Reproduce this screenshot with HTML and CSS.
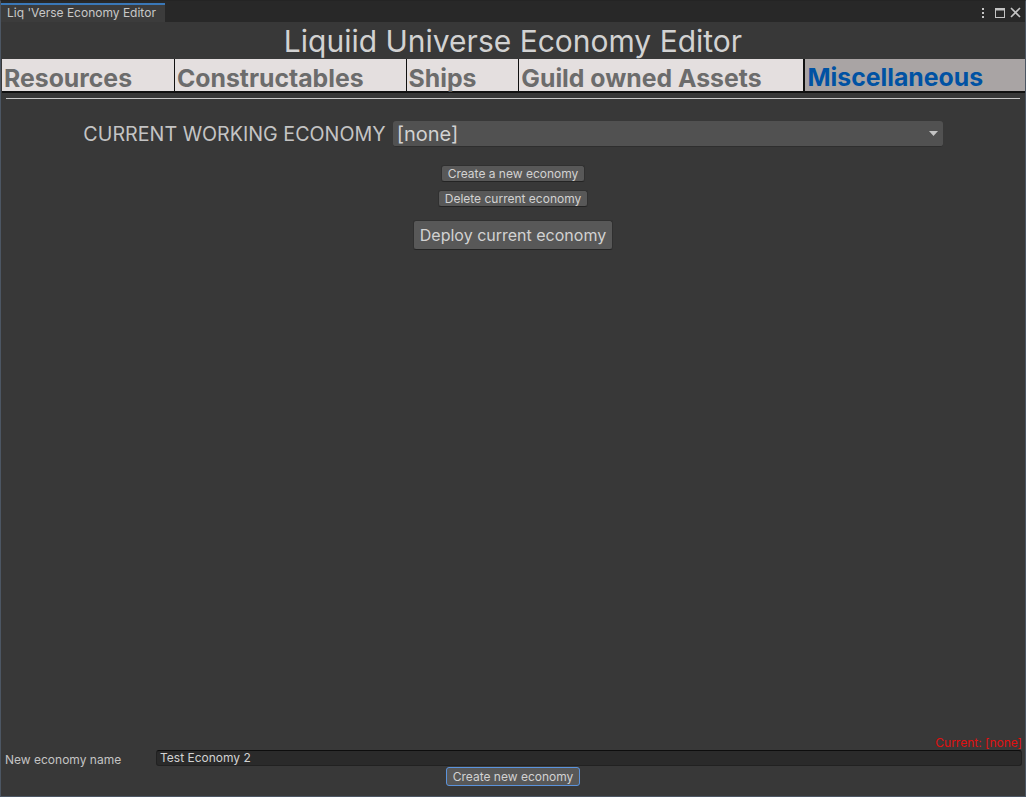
FILE: index.html
```html
<!DOCTYPE html>
<html>
<head>
<meta charset="utf-8">
<link rel="stylesheet" href="styles.css">
</head>
<body>
<div class="window">
  <div class="tabstrip">
    <div class="doc-tab">Liq 'Verse Economy Editor</div>
    <div class="strip-fill"></div>
    <div class="win-icons">
      <svg class="ico-menu" width="4" height="10" viewBox="0 0 4 10"><rect x="1" y="0" width="2" height="2" fill="#c4c4c4"/><rect x="1" y="4" width="2" height="2" fill="#c4c4c4"/><rect x="1" y="8" width="2" height="2" fill="#c4c4c4"/></svg>
      <svg class="ico-max" width="10" height="10" viewBox="0 0 10 10"><rect x="0.5" y="0.5" width="9" height="9" fill="none" stroke="#c4c4c4"/><rect x="0.5" y="0.5" width="9" height="2" fill="#c4c4c4"/></svg>
      <svg class="ico-close" width="11" height="11" viewBox="0 0 11 11"><path d="M1 1 L10 10 M10 1 L1 10" stroke="#c4c4c4" stroke-width="1.6"/></svg>
    </div>
  </div>
  <div class="content">
    <div class="title">Liquiid Universe Economy Editor</div>
    <div class="toolbar">
      <div class="tb-item">Resources</div>
      <div class="tb-item">Constructables</div>
      <div class="tb-item">Ships</div>
      <div class="tb-item">Guild owned Assets</div>
      <div class="tb-item selected">Miscellaneous</div>
    </div>
    <div class="rule"></div>
    <div class="working-row">
      <span class="working-label">CURRENT WORKING ECONOMY</span>
      <div class="dropdown">
        <span>[none]</span>
        <svg width="9" height="5" viewBox="0 0 9 5"><path d="M0 0 H9 L4.5 5 Z" fill="#c4c4c4"/></svg>
      </div>
    </div>
    <div class="actions">
      <button class="btn small">Create a new economy</button>
      <button class="btn small second">Delete current economy</button>
      <button class="btn large">Deploy current economy</button>
    </div>
    <div class="spacer"></div>
    <div class="footer">
      <div class="current">Current: [none]</div>
      <div class="name-row">
        <span class="name-label">New economy name</span>
        <div class="text-input">Test Economy 2</div>
      </div>
      <div class="create-row">
        <button class="btn focused">Create new economy</button>
      </div>
    </div>
  </div>
</div>
</body>
</html>
```
FILE: styles.css
```css
* { box-sizing: border-box; }
html, body { margin: 0; padding: 0; }
body {
  width: 1026px;
  height: 797px;
  background: #282828;
  font-family: Inter, "Noto Sans", sans-serif;
  overflow: hidden;
}
.window {
  width: 1026px;
  height: 797px;
  border: 1px solid #4c5663;
  border-top-color: #242424;
  display: flex;
  flex-direction: column;
  background: #383838;
}
.tabstrip {
  height: 21px;
  display: flex;
  align-items: flex-end;
  background: #282828;
}
.doc-tab {
  width: 164px;
  height: 19px;
  border-top: 2px solid #3a78b8;
  background: #3c3c3c;
  color: #c8c8c8;
  font-size: 12px;
  line-height: 16px;
  padding-left: 6px;
}
.strip-fill { flex: 1; }
.win-icons {
  align-self: stretch;
  display: flex;
  align-items: center;
  padding-right: 4px;
  padding-top: 2px;
}
.ico-menu { margin-right: 10px; }
.ico-max { margin-right: 5px; }
.content {
  flex: 1;
  display: flex;
  flex-direction: column;
}
.title {
  height: 37px;
  text-align: center;
  color: #d2d2d2;
  font-size: 30px;
  line-height: 38px;
}
.toolbar {
  height: 34px;
  display: flex;
  margin-left: 1px;
  border-bottom: 2px solid #111;
}
.tb-item {
  flex: 1 1 auto;
  background: #e4dfdf;
  color: #6c6c6c;
  font-weight: 700;
  font-size: 24.8px;
  line-height: 34px;
  padding-left: 2px;
  padding-top: 2px;
  border-left: 1px solid #111;
  white-space: nowrap;
}
.tb-item:first-child { border-left: none; }
.tb-item.selected {
  background: #a9a4a4;
  color: #0052a3;
  border-left: 2px solid #111;
  padding-top: 1px;
}
.rule {
  height: 1px;
  margin: 5px 5px 0 5px;
  background: #c8c8c8;
}
.working-row {
  margin-top: 22px;
  display: flex;
  justify-content: center;
  align-items: center;
  gap: 7px;
}
.working-label {
  color: #c4c4c4;
  font-size: 19.7px;
}
.dropdown {
  width: 550px;
  height: 26px;
  background: #515151;
  border-radius: 3px;
  border-bottom: 1px solid #2e2e2e;
  display: flex;
  align-items: center;
  justify-content: space-between;
  padding: 0 5px 0 4px;
  color: #d2d2d2;
  font-size: 20px;
}
.actions {
  margin-top: 18px;
  display: flex;
  flex-direction: column;
  align-items: center;
}
.btn {
  font-family: Inter, "Noto Sans", sans-serif;
  background: #585858;
  color: #d2d2d2;
  border: 1px solid #303030;
  border-bottom-color: #242424;
  border-radius: 3px;
  padding: 0 6px;
  margin: 0;
}
.btn.small {
  height: 17px;
  font-size: 12px;
  line-height: 14px;
}
.btn.second { margin-top: 8px; }
.btn.large {
  margin-top: 13px;
  height: 30px;
  font-size: 16px;
  padding: 0 6px;
}
.spacer { flex: 1; }
.footer {
  display: flex;
  flex-direction: column;
  padding-bottom: 10px;
}
.current {
  text-align: right;
  color: #e01010;
  font-size: 12px;
  line-height: 15px;
  padding-right: 3px;
}
.name-row {
  display: flex;
  align-items: center;
  height: 16px;
}
.name-label {
  width: 155px;
  padding-left: 4px;
  color: #c4c4c4;
  font-size: 12px;
  margin-top: 3px;
}
.text-input {
  flex: 1;
  margin-right: 3px;
  height: 16px;
  background: #2a2a2a;
  border: 1px solid #212121;
  border-top-color: #0d0d0d;
  border-radius: 3px;
  color: #d2d2d2;
  font-size: 12px;
  line-height: 13px;
  padding-left: 3px;
}
.create-row {
  margin-top: 1px;
  display: flex;
  justify-content: center;
}
.btn.focused {
  height: 19px;
  font-size: 12px;
  line-height: 16px;
  border: 1px solid #5b93dc;
  background: #585858;
  padding: 0 6px;
}
```
